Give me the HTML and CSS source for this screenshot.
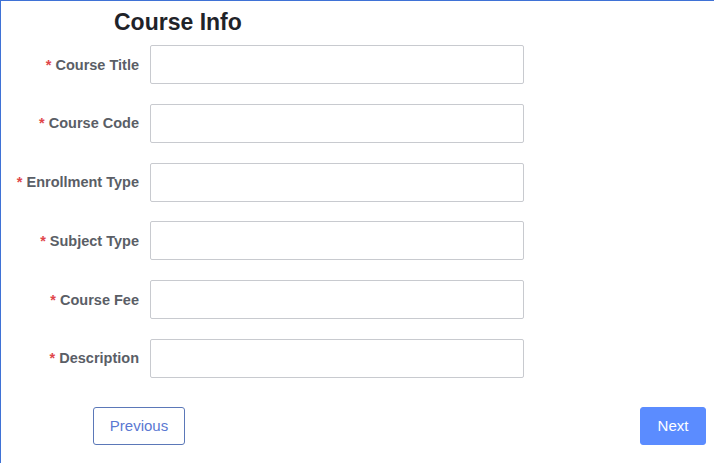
FILE: index.html
```html
<!DOCTYPE html>
<html>
<head>
<meta charset="utf-8">
<link rel="stylesheet" href="styles.css">
</head>
<body>
<div class="page">
  <h1 class="title">Course Info</h1>
  <form class="form">
    <div class="row"><label class="label"><span class="req">*</span>Course Title</label><input class="input" type="text"></div>
    <div class="row"><label class="label"><span class="req">*</span>Course Code</label><input class="input" type="text"></div>
    <div class="row"><label class="label"><span class="req">*</span>Enrollment Type</label><input class="input" type="text"></div>
    <div class="row"><label class="label"><span class="req">*</span>Subject Type</label><input class="input" type="text"></div>
    <div class="row"><label class="label"><span class="req">*</span>Course Fee</label><input class="input" type="text"></div>
    <div class="row"><label class="label"><span class="req">*</span>Description</label><input class="input" type="text"></div>
  </form>
  <div class="actions">
    <button class="btn btn-prev" type="button">Previous</button>
    <button class="btn btn-next" type="button">Next</button>
  </div>
</div>
</body>
</html>
```
FILE: styles.css
```css
html, body {
  margin: 0;
  padding: 0;
  background: #ffffff;
}
body {
  font-family: "Liberation Sans", Arial, sans-serif;
  width: 714px;
  height: 463px;
  overflow: hidden;
}
.page {
  box-sizing: border-box;
  height: 463px;
  border-top: 1px solid #3f72d6;
  border-left: 1px solid #3f72d6;
  padding-top: 8px;
}
.title {
  margin: 0 0 10px 113px;
  font-size: 23px;
  font-weight: bold;
  color: #1f2329;
  line-height: 26px;
}
.form {
  display: flex;
  flex-direction: column;
  gap: 19.8px;
}
.row {
  display: flex;
  align-items: center;
}
.label {
  box-sizing: border-box;
  width: 149px;
  padding-right: 11px;
  text-align: right;
  font-size: 14.5px;
  font-weight: bold;
  color: #5a5e66;
}
.req {
  color: #e0464a;
  margin-right: 4px;
}
.input {
  box-sizing: border-box;
  width: 374px;
  height: 39px;
  border: 1px solid #c8cacf;
  border-radius: 2px;
  margin: 0;
  padding: 0 10px;
  background: #fff;
  outline: none;
}
.actions {
  display: flex;
  justify-content: space-between;
  padding: 0 8px 0 92px;
  margin-top: 28.8px;
}
.btn {
  box-sizing: border-box;
  height: 38px;
  font-family: "Liberation Sans", Arial, sans-serif;
  font-size: 15px;
  border-radius: 3px;
  cursor: pointer;
}
.btn-prev {
  width: 92px;
  background: #fff;
  border: 1px solid #5b78b8;
  color: #5a78d2;
}
.btn-next {
  width: 66px;
  background: #5b8cff;
  border: 1px solid #5b8cff;
  color: #fff;
}
```
